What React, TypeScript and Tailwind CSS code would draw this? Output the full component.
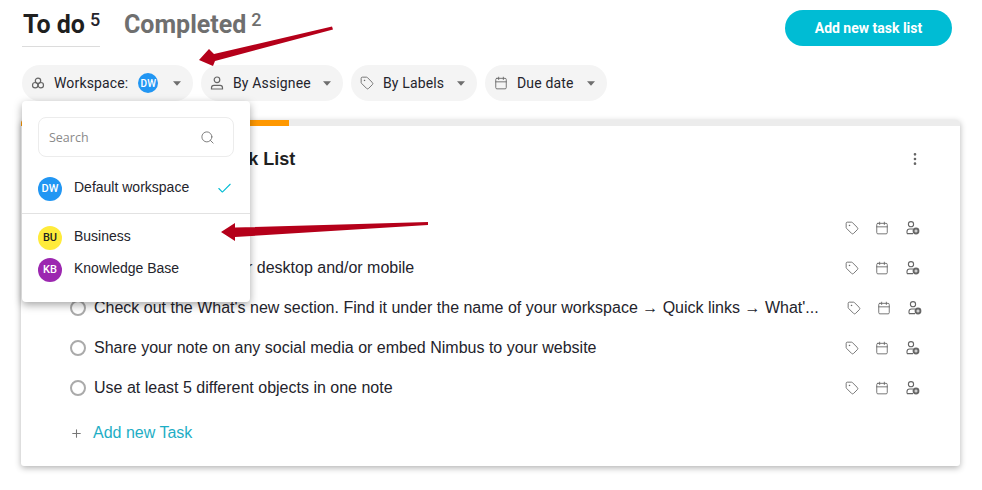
import React from 'react';
import { Calendar, Check, EllipsisVertical, Plus, Search, Tag } from 'lucide-react';

const Caret = () => (
    <svg width="8" height="5" viewBox="0 0 8 5" className="shrink-0"><path d="M0 .3h8L4 4.8z" fill="#6e6e6e" /></svg>
);

const WorkspaceIcon = () => (
    <svg width="14" height="14" viewBox="0 0 14 14" fill="none" stroke="#666" strokeWidth="1.2" className="shrink-0">
        <circle cx="7" cy="4.8" r="2.7" />
        <circle cx="4.2" cy="9.2" r="2.7" />
        <circle cx="9.8" cy="9.2" r="2.7" />
    </svg>
);

const UserIcon = () => (
    <svg width="14" height="14" viewBox="0 0 14 14" fill="none" stroke="#666" strokeWidth="1.2" className="shrink-0">
        <circle cx="7" cy="3.8" r="2.8" />
        <path d="M1.5 13v-1.2c0-1.4 1-2.4 2.4-2.4h6.2c1.4 0 2.4 1 2.4 2.4V13z" />
    </svg>
);

const AssignIcon = () => (
    <svg width="14" height="14" viewBox="0 0 14 14" fill="none" className="shrink-0 ml-px">
        <circle cx="5" cy="3.2" r="2.6" stroke="#666" strokeWidth="1.1" />
        <path d="M1 12.6v-2C1 9 2.2 8 3.6 8h3.4M1 12.6h6" stroke="#666" strokeWidth="1.1" />
        <circle cx="10" cy="10" r="3.4" fill="#666" />
        <path d="M10 8.4v3.2M8.4 10h3.2" stroke="#fff" strokeWidth="0.9" />
    </svg>
);

const filters = [
    { label: 'By Assignee', icon: <UserIcon />, width: 'w-[142px]' },
    { label: 'By Labels', icon: <Tag size={14} strokeWidth={1.5} color="#666" className="shrink-0" />, width: 'w-[126px]' },
    { label: 'Due date', icon: <Calendar size={14} strokeWidth={1.5} color="#666" className="shrink-0" />, width: 'w-[122px]' },
];

const tasks = [
    { text: 'Create your first note', shift: false },
    { text: 'Install the app for your desktop and/or mobile', shift: false },
    { text: "Check out the What's new section. Find it under the name of your workspace → Quick links → What'...", shift: true },
    { text: 'Share your note on any social media or embed Nimbus to your website', shift: false },
    { text: 'Use at least 5 different objects in one note', shift: false },
];

const Avatar = ({ text, className }: { text: string; className: string }) => (
    <div className={`w-6 h-6 rounded-full flex items-center justify-center text-[11px] font-medium font-['Roboto',sans-serif] shrink-0 ${className}`}>{text}</div>
);

const App: React.FC = () => {
    return (
        <div className="relative w-[982px] h-[490px] overflow-hidden bg-white font-['Roboto',sans-serif] text-[#24242c]">
            {/* tabs */}
            <div className="flex justify-between h-[47px] pl-[22px] pr-[30px]">
                <div className="flex">
                    <div className="w-[78px] h-[47px] border-b border-[#dcdcdc] flex items-start pt-[9px] pl-px whitespace-nowrap">
                        <span className="text-[25px] leading-[32px] font-bold text-[#1f1f1f]">To do</span>
                        <span className="ml-[5px] text-[18px] leading-[24px] font-medium -mt-[1px]">5</span>
                    </div>
                    <div className="ml-6 flex items-start pt-[9px] text-[#6f6f6f] whitespace-nowrap">
                        <span className="text-[25px] leading-[32px] font-bold">Completed</span>
                        <span className="ml-[5px] text-[18px] leading-[24px] font-medium -mt-[1px]">2</span>
                    </div>
                </div>
                <button className="mt-[10px] w-[167px] h-9 rounded-full bg-[#00bcd4] text-white text-[14px] font-bold">Add new task list</button>
            </div>

            {/* filters */}
            <div className="flex gap-2 mt-[18px] pl-[22px] text-[14px] tracking-[0.15px]">
                <div className="w-[171px] h-9 rounded-full bg-[#f4f4f4] flex items-center pl-[9px]">
                    <WorkspaceIcon />
                    <span className="ml-[9px]">Workspace:</span>
                    <div className="ml-[10px] w-5 h-5 rounded-full bg-[#2196f3] text-white text-[10px] font-medium flex items-center justify-center">DW</div>
                    <span className="ml-[15px]"><Caret /></span>
                </div>
                {filters.map(f => (
                    <div key={f.label} className={`${f.width} h-9 rounded-full bg-[#f4f4f4] flex items-center pl-[9px]`}>
                        {f.icon}
                        <span className="ml-[9px] flex-1">{f.label}</span>
                        <span className="mr-[12px]"><Caret /></span>
                    </div>
                ))}
            </div>

            {/* task list card */}
            <div className="ml-[21px] mt-[19px] w-[939px] h-[346px] rounded-[3px] bg-white shadow-[0_2px_6px_rgba(0,0,0,0.3)] overflow-hidden">
                <div className="h-1.5 bg-[#ececec]">
                    <div className="h-1.5 w-[268px] bg-[#ff9800]" />
                </div>
                <div className="h-[66px] flex items-center justify-between pl-[46px] pr-[37px]">
                    <span className="text-[18px] font-bold font-['Liberation_Sans',sans-serif] text-[#1f1f1f]">Your Onboarding Task List</span>
                    <EllipsisVertical size={16} color="#666" />
                </div>
                <div className="mt-4 font-['Liberation_Sans',sans-serif] text-[16px]">
                    {tasks.map(t => (
                        <div key={t.text} className="h-10 flex items-center pl-[49px]">
                            <div className="w-4 h-4 rounded-full border-2 border-[#aaaaaa] shrink-0" />
                            <div className="w-[750px] ml-2 shrink-0 whitespace-nowrap">{t.text}</div>
                            <div className={`flex items-center gap-4 ${t.shift ? 'pl-[3px]' : 'pl-px'}`}>
                                <Tag size={14} strokeWidth={1.5} color="#666" />
                                <Calendar size={14} strokeWidth={1.5} color="#666" />
                                <AssignIcon />
                            </div>
                        </div>
                    ))}
                </div>
                <div className="h-10 mt-[5px] flex items-center pl-[49px] font-['Liberation_Sans',sans-serif] text-[16px] text-[#1eaec5]">
                    <Plus size={13} color="#777" />
                    <span className="ml-[10px]">Add new Task</span>
                </div>
            </div>

            {/* workspace dropdown */}
            <div className="absolute left-[22px] top-[101px] w-[228px] h-[201px] bg-white rounded-[4px] shadow-[0_3px_8px_rgba(0,0,0,0.35)] pt-4 text-[14px]">
                <div className="mx-4 h-10 border border-[#ececec] rounded-lg flex items-center pl-[10px] pr-[18px]">
                    <input placeholder="Search" className="flex-1 min-w-0 outline-none mt-[2px] text-[12.5px] font-['Open_Sans',sans-serif] placeholder:text-[#8a8a8a]" />
                    <Search size={15} color="#777" strokeWidth={1.5} />
                </div>
                <div className="flex items-center mt-5 pl-4 h-6 font-['Liberation_Sans',sans-serif]">
                    <Avatar text="DW" className="bg-[#2196f3] text-white" />
                    <span className="ml-3 flex-1 -mt-[3px]">Default workspace</span>
                    <Check size={17} color="#00bcd4" strokeWidth={1.5} className="mr-[17px] -mt-[2px]" />
                </div>
                <div className="border-t border-[#e2e2e2] mt-3" />
                <div className="font-['Liberation_Sans',sans-serif]">
                    <div className="flex mt-3 pl-4 h-6">
                        <Avatar text="BU" className="bg-[#ffeb3b] text-[#222]" />
                        <span className="ml-3 -mt-[2px] leading-6">Business</span>
                    </div>
                    <div className="flex mt-2 pl-4 h-6">
                        <Avatar text="KB" className="bg-[#9c27b0] text-white" />
                        <span className="ml-3 -mt-[2px] leading-6">Knowledge Base</span>
                    </div>
                </div>
            </div>

            {/* annotation arrows */}
            <svg className="absolute inset-0 pointer-events-none" width="982" height="490" viewBox="0 0 982 490">
                <path d="M199 60 L209 49 L214 54 L332 26.5 L333 29.5 L215 61 L213 66 Z" fill="#b5001a" />
                <path d="M221 232 L235 223 L235 227.5 L428 222 L428 225 L235 237 L235 241 Z" fill="#b5001a" />
            </svg>
        </div>
    );
};

export default App;
